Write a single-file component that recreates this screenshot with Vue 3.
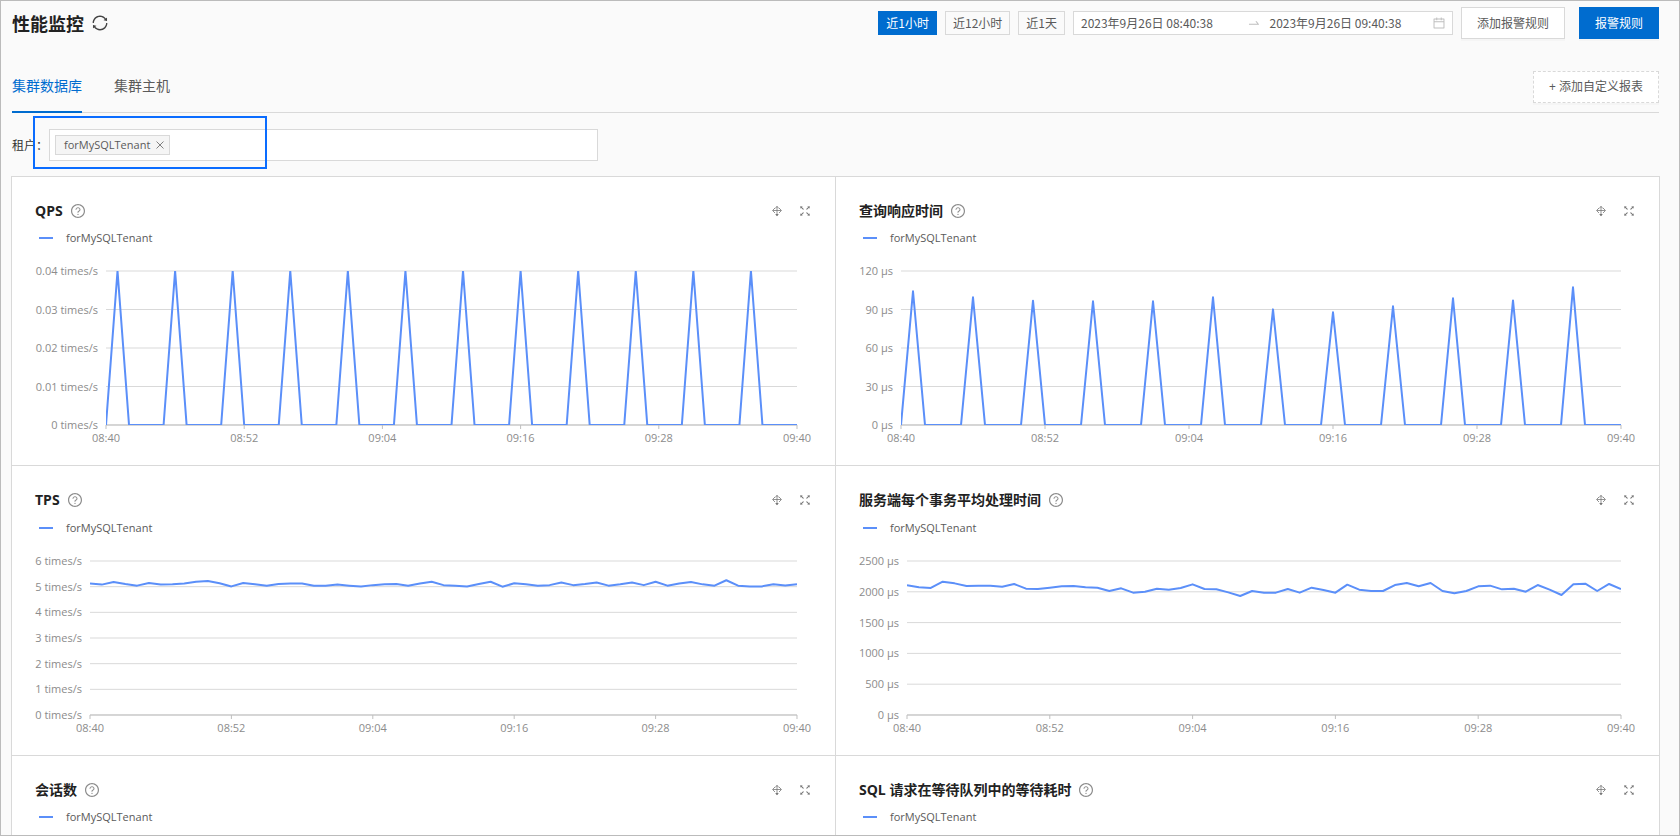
<script setup>
import { ref } from 'vue'

const ranges = ['近1小时', '近12小时', '近1天']
const activeRange = ref(0)
const tabs = ['集群数据库', '集群主机']
const activeTab = ref(0)
const startTime = ref('2023年9月26日 08:40:38')
const endTime = ref('2023年9月26日 09:40:38')
const tenant = ref('')

const times = ['08:40', '08:52', '09:04', '09:16', '09:28', '09:40']
const PLOT_HEIGHT = 154

// One sample per minute; the load peaks every fifth minute.
function spikes(peaks) {
  const out = Array(61).fill(0)
  peaks.forEach((v, i) => { out[1 + i * 5] = v })
  return out
}

const tps = [
  5.12, 5.08, 5.18, 5.1, 5.04, 5.14, 5.08, 5.09, 5.12, 5.19, 5.22, 5.13, 5.01, 5.14, 5.09, 5.04,
  5.1, 5.12, 5.12, 5.04, 5.04, 5.08, 5.04, 5.01, 5.06, 5.09, 5.1, 5.04, 5.12, 5.19, 5.06, 5.04,
  5.01, 5.1, 5.19, 5, 5.13, 5.09, 5.04, 5.06, 5.16, 5.06, 5.1, 5.16, 5.04, 5.09, 5.16, 5.06,
  5.19, 5.04, 5.12, 5.18, 5.09, 5.04, 5.25, 5.04, 5.01, 5.01, 5.09, 5.05, 5.09
]
const serverTime = [
  2105, 2073, 2062, 2165, 2137, 2094, 2100, 2100, 2083, 2127, 2051, 2045, 2067, 2089, 2094, 2073,
  2067, 2013, 2056, 1986, 2002, 2051, 2035, 2062, 2121, 2045, 2040, 1991, 1932, 2013, 1986, 1986,
  2045, 1986, 2067, 2029, 1986, 2116, 2035, 2013, 2013, 2110, 2143, 2089, 2143, 2013, 1975, 2013,
  2089, 2100, 2040, 2051, 2002, 2110, 2035, 1948, 2121, 2132, 2013, 2127, 2045
]

const charts = [
  { title: 'QPS', axis: 71, max: 0.04, labels: ['0.04 times/s', '0.03 times/s', '0.02 times/s', '0.01 times/s', '0 times/s'], data: spikes(Array(12).fill(0.04)) },
  { title: '查询响应时间', axis: 42, max: 120, labels: ['120 μs', '90 μs', '60 μs', '30 μs', '0 μs'], data: spikes([104.2, 99.5, 96.9, 96.4, 96.4, 99.5, 90.1, 87.8, 92.5, 98.7, 97.1, 107.3]) },
  { title: 'TPS', axis: 55, max: 6, labels: ['6 times/s', '5 times/s', '4 times/s', '3 times/s', '2 times/s', '1 times/s', '0 times/s'], data: tps },
  { title: '服务端每个事务平均处理时间', axis: 48, max: 2500, labels: ['2500 μs', '2000 μs', '1500 μs', '1000 μs', '500 μs', '0 μs'], data: serverTime },
  { title: '会话数' },
  { title: 'SQL 请求在等待队列中的等待耗时' }
]

function points(chart) {
  return chart.data
    .map((v, i) => `${(i * 10).toFixed(1)},${(PLOT_HEIGHT * (1 - v / chart.max)).toFixed(2)}`)
    .join(' ')
}
</script>

<template>
  <div class="frame">
    <header class="head">
      <h1>性能监控</h1>
      <button class="icon-btn reload" aria-label="刷新">
        <svg width="18" height="18" viewBox="0 0 1024 1024" fill="currentColor"><path d="M168 504.2c1-43.7 10-86.1 26.9-126 17.3-41 42.1-77.7 73.7-109.4S337 212.3 378 195c42.4-17.9 87.4-27 133.9-27s91.5 9.1 133.8 27A341.5 341.5 0 01755 268.8c9.9 9.9 19.2 20.4 27.8 31.4l-60.2 47a8 8 0 003 14.1l175.7 43c5 1.2 9.9-2.6 9.9-7.7l.8-180.9c0-6.7-7.7-10.5-12.9-6.3l-56.4 44.1C765.8 155.1 646.2 92 511.8 92 282.7 92 96.3 275.6 92 503.8a8 8 0 008 8.2h60c4.4 0 7.9-3.5 8-7.8zm756 7.8h-60c-4.4 0-7.9 3.5-8 7.8-1 43.7-10 86.1-26.9 126-17.3 41-42.1 77.8-73.7 109.4A342.45 342.45 0 01512.1 856a342.24 342.24 0 01-243.2-100.8c-9.9-9.9-19.2-20.4-27.8-31.4l60.2-47a8 8 0 00-3-14.1l-175.7-43c-5-1.2-9.9 2.6-9.9 7.7l-.7 181c0 6.7 7.7 10.5 12.9 6.3l56.4-44.1C258.2 868.9 377.8 932 512.2 932c229.2 0 415.5-183.7 419.8-411.8a8 8 0 00-8-8.2z" /></svg>
      </button>
      <div class="tools">
        <button v-for="(r, i) in ranges" :key="r" class="range" :class="{ active: i === activeRange }" @click="activeRange = i">{{ r }}</button>
        <div class="picker">
          <input v-model="startTime" aria-label="开始时间">
          <span class="sep">
            <svg width="14" height="14" viewBox="0 0 1024 1024" fill="currentColor"><path d="M873.1 596.2l-164-208A32 32 0 00684 376h-64.8c-6.7 0-10.4 7.7-6.3 13l144.3 183H152c-4.4 0-8 3.6-8 8v60c0 4.4 3.6 8 8 8h695.9c26.8 0 41.7-30.8 25.2-51.8z" /></svg>
          </span>
          <input v-model="endTime" aria-label="结束时间">
          <svg class="calendar" width="14" height="14" viewBox="0 0 1024 1024" fill="currentColor"><path d="M880 184H712v-64c0-4.4-3.6-8-8-8h-56c-4.4 0-8 3.6-8 8v64H384v-64c0-4.4-3.6-8-8-8h-56c-4.4 0-8 3.6-8 8v64H144c-17.7 0-32 14.3-32 32v664c0 17.7 14.3 32 32 32h736c17.7 0 32-14.3 32-32V216c0-17.7-14.3-32-32-32zm-40 656H184V460h656v380zM184 392V256h128v48c0 4.4 3.6 8 8 8h56c4.4 0 8-3.6 8-8v-48h256v48c0 4.4 3.6 8 8 8h56c4.4 0 8-3.6 8-8v-48h128v136H184z" /></svg>
        </div>
        <button class="btn">添加报警规则</button>
        <button class="btn primary">报警规则</button>
      </div>
    </header>

    <nav class="tabs">
      <button v-for="(t, i) in tabs" :key="t" class="tab" :class="{ active: i === activeTab }" @click="activeTab = i">{{ t }}</button>
      <button class="btn dashed">+ 添加自定义报表</button>
    </nav>

    <div class="filter">
      <label for="tenant">租户：</label>
      <div class="select">
        <span class="tag">forMySQLTenant
          <button class="icon-btn" aria-label="移除">
            <svg width="8" height="8" viewBox="0 0 8 8" fill="none" stroke="currentColor"><path d="M.5.5l7 7M7.5.5l-7 7" /></svg>
          </button>
        </span>
        <input id="tenant" v-model="tenant">
      </div>
      <span class="marker"></span>
    </div>

    <main class="grid">
      <section v-for="c in charts" :key="c.title" class="card">
        <div class="card-head">
          <h2>{{ c.title }}</h2>
          <svg class="help" width="16" height="16" viewBox="0 0 1024 1024" fill="currentColor">
            <path d="M512 64C264.6 64 64 264.6 64 512s200.6 448 448 448 448-200.6 448-448S759.4 64 512 64zm0 820c-205.4 0-372-166.6-372-372s166.6-372 372-372 372 166.6 372 372-166.6 372-372 372z" />
            <path d="M623.6 316.7C593.6 290.4 554 276 512 276s-81.6 14.5-111.6 40.7C369.2 344 352 380.7 352 420v7.6c0 4.4 3.6 8 8 8h48c4.4 0 8-3.6 8-8V420c0-44.1 43.1-80 96-80s96 35.9 96 80c0 31.1-22 59.6-56.1 72.7-21.2 8.1-39.2 22.3-52.1 40.9-13.1 19-19.9 41.8-19.9 64.9V620c0 4.4 3.6 8 8 8h48c4.4 0 8-3.6 8-8v-22.7a48.3 48.3 0 0130.9-44.8c59-22.7 97.1-74.7 97.1-132.5.1-39.3-17.1-76-48.3-103.3zM472 732a40 40 0 1080 0 40 40 0 10-80 0z" />
          </svg>
          <div class="actions">
            <button class="icon-btn" aria-label="拖动">
              <svg width="14" height="14" viewBox="0 0 14 14" fill="none" stroke="currentColor">
                <path d="M7 2v10M3 6.500h8" stroke-width=".8" />
                <path d="M5 4L2.500 6.500L5 9M9 4l2.500 2.500L9 9M5 4.500L7 2.500L9 4.500" stroke-width=".8" />
                <path d="M5.200 10h3.600L7 12.200z" fill="currentColor" stroke="none" />
              </svg>
            </button>
            <button class="icon-btn" aria-label="全屏">
              <svg width="14" height="14" viewBox="0 0 1024 1024" fill="currentColor"><path d="M290 236.4l43.9-43.9a8.01 8.01 0 00-4.7-13.6L169 160c-5.1-.6-9.5 3.7-8.9 8.9L179 329.1c.8 6.6 8.9 9.4 13.6 4.7l43.7-43.7L370 423.7c3.1 3.1 8.2 3.1 11.3 0l42.4-42.3c3.1-3.1 3.1-8.2 0-11.3L290 236.4zm352.7 187.3c3.1 3.1 8.2 3.1 11.3 0l133.7-133.6 43.7 43.7a8.01 8.01 0 0013.6-4.7L863.9 169c.6-5.1-3.7-9.5-8.9-8.9L694.8 179c-6.6.8-9.4 8.9-4.7 13.6l43.9 43.9L600.3 370a8.03 8.03 0 000 11.3l42.4 42.4zM845 694.9c-.8-6.6-8.9-9.4-13.6-4.7l-43.7 43.7L654 600.3a8.03 8.03 0 00-11.3 0l-42.4 42.3a8.03 8.03 0 000 11.3L734 787.6l-43.9 43.9a8.01 8.01 0 004.7 13.6L855 864c5.1.6 9.5-3.7 8.9-8.9L845 694.9zm-463.7-94.6a8.03 8.03 0 00-11.3 0L236.3 733.9l-43.7-43.7a8.01 8.01 0 00-13.6 4.7L160.1 855c-.6 5.1 3.7 9.5 8.9 8.9L329.2 845c6.6-.8 9.4-8.9 4.7-13.6L290 787.6 423.7 654c3.1-3.1 3.1-8.2 0-11.3l-42.4-42.4z" /></svg>
            </button>
          </div>
        </div>

        <div class="body">
          <div class="legend"><i></i>forMySQLTenant</div>
          <div class="chart">
            <template v-if="c.data">
              <div class="y-axis" :style="{ width: c.axis + 'px' }">
                <span v-for="l in c.labels" :key="l">{{ l }}</span>
              </div>
              <div class="plot">
                <svg class="lines" viewBox="0 0 600 154" preserveAspectRatio="none">
                  <line v-for="(l, i) in c.labels" :key="l" x1="0" x2="600" :y1="PLOT_HEIGHT * i / (c.labels.length - 1)" :y2="PLOT_HEIGHT * i / (c.labels.length - 1)" />
                  <path class="base" d="M0 154H600" />
                  <path class="ticks" d="M0 154v4M120 154v4M240 154v4M360 154v4M480 154v4M600 154v4" />
                </svg>
                <svg class="series" viewBox="0 0 600 154" preserveAspectRatio="none">
                  <polyline :points="points(c)" />
                </svg>
                <div class="x-axis"><span v-for="t in times" :key="t">{{ t }}</span></div>
              </div>
            </template>
          </div>
        </div>
      </section>
    </main>
  </div>
</template>

<style>
body { margin: 0; }
</style>

<style scoped>
.frame {
  box-sizing: border-box;
  height: 100vh;
  overflow: hidden;
  padding: 6px 20px 0 11px;
  border: 1px solid #bbb;
  background: #fafafa;
  color: #5a5a5a;
  font: 12px/20px "Noto Sans CJK SC", sans-serif;
}
button, input { font: inherit; color: inherit; margin: 0; padding: 0; }
svg { display: block; flex: none; }
.icon-btn { display: flex; border: 0; background: none; color: inherit; }

.head { display: flex; align-items: center; height: 32px; }
h1 { margin: 0; font-size: 18px; line-height: 28px; font-weight: 600; color: #222; }
.reload { margin-left: 7px; color: #444; }
.tools { display: flex; align-items: center; gap: 8px; margin-left: auto; }
.range {
  height: 24px;
  padding: 0 7px;
  border: 1px solid #d9d9d9;
  background: #fafafa;
  white-space: nowrap;
}
.range.active { border-color: #006ccf; background: #006ccf; color: #fff; }
.picker {
  box-sizing: border-box;
  display: flex;
  align-items: center;
  width: 380px;
  height: 24px;
  padding: 0 6px 0 7px;
  border: 1px solid #d9d9d9;
  background: #fff;
}
.picker input { flex: 1; min-width: 0; border: 0; outline: 0; background: none; }
.sep { padding: 0 8px; color: #bfbfbf; }
.calendar { margin-left: 4px; color: #bfbfbf; }
.btn {
  height: 32px;
  padding: 0 15px;
  border: 1px solid #d9d9d9;
  background: #fff;
  box-shadow: 0 2px 0 rgba(0, 0, 0, 0.02);
  white-space: nowrap;
}
.primary { margin-left: 6px; border-color: #006ccf; background: #006ccf; color: #fff; }

.tabs {
  display: flex;
  align-items: center;
  gap: 32px;
  height: 51px;
  margin-top: 22px;
  border-bottom: 1px solid #d9d9d9;
  font-family: "Open Sans", "Noto Sans CJK SC", sans-serif;
}
.tab {
  align-self: stretch;
  margin-bottom: -1px;
  border: 0;
  border-bottom: 2px solid transparent;
  background: none;
  font-size: 14px;
}
.tab.active { border-bottom-color: #006ccf; color: #006ccf; }
.dashed { margin-left: auto; border-style: dashed; }

.filter { position: relative; display: flex; align-items: center; margin-top: 16px; }
.filter label { width: 37px; color: #333; white-space: nowrap; }
.select {
  box-sizing: border-box;
  display: flex;
  align-items: center;
  width: 549px;
  height: 32px;
  padding: 0 5px;
  border: 1px solid #d9d9d9;
  background: #fff;
}
.select input { flex: 1; min-width: 0; border: 0; outline: 0; background: none; }
.tag {
  display: flex;
  align-items: center;
  gap: 6px;
  height: 18px;
  padding: 0 5px 0 8px;
  border: 1px solid #d9d9d9;
  background: #f5f5f5;
}
.tag, .legend, .chart { font-family: "Open Sans", sans-serif; font-size: 11px; }
.tag .icon-btn { color: #808080; }
.marker {
  position: absolute;
  top: -13px;
  left: 21px;
  width: 230px;
  height: 49px;
  border: 2px solid #0a6cff;
  pointer-events: none;
}

.grid {
  display: grid;
  grid-template-columns: 1fr 1fr;
  grid-template-rows: minmax(289px, auto) minmax(290px, auto) minmax(289px, auto);
  margin: 15px -1px 0;
  border: solid #d9d9d9;
  border-width: 1px 0 0 1px;
  background: #fff;
}
.card {
  display: flex;
  flex-direction: column;
  padding: 23px 23px 19px;
  border: solid #d9d9d9;
  border-width: 0 1px 1px 0;
}
.card-head { display: flex; align-items: center; height: 22px; }
h2 { margin: 0; font-family: "Open Sans", "Noto Sans CJK SC", sans-serif; font-size: 14px; line-height: 22px; font-weight: 700; color: #222; }
.help { margin-left: 7px; color: #8c8c8c; }
.actions { display: flex; gap: 14px; margin-left: auto; color: #777; }
.body { margin-top: auto; }
.legend { display: flex; align-items: center; padding-left: 4px; }
.legend i { width: 14px; height: 2px; margin-right: 13px; background: #5b8ff9; }
.chart { display: flex; min-height: 175px; margin-top: 23px; padding-right: 15px; color: #8c8c8c; }
.y-axis { display: flex; flex-direction: column; justify-content: space-between; height: 154px; }
.y-axis span {
  display: flex;
  align-items: center;
  justify-content: flex-end;
  height: 0;
  padding-right: 8px;
  white-space: nowrap;
}
.plot { display: grid; grid-template-columns: 1fr; flex: 1; min-width: 0; align-content: start; }
.plot svg { grid-area: 1 / 1; width: 100%; height: 154px; }
.lines { overflow: visible; fill: none; stroke: #d9d9d9; }
.lines > * { vector-effect: non-scaling-stroke; }
.base, .ticks { stroke: #bfbfbf; }
.series { fill: none; stroke: #5b8ff9; stroke-width: 2; stroke-linejoin: round; }
.series polyline { vector-effect: non-scaling-stroke; }
.x-axis { display: flex; justify-content: space-between; margin-top: 5px; line-height: 16px; }
.x-axis span { display: flex; justify-content: center; width: 0; }
</style>
